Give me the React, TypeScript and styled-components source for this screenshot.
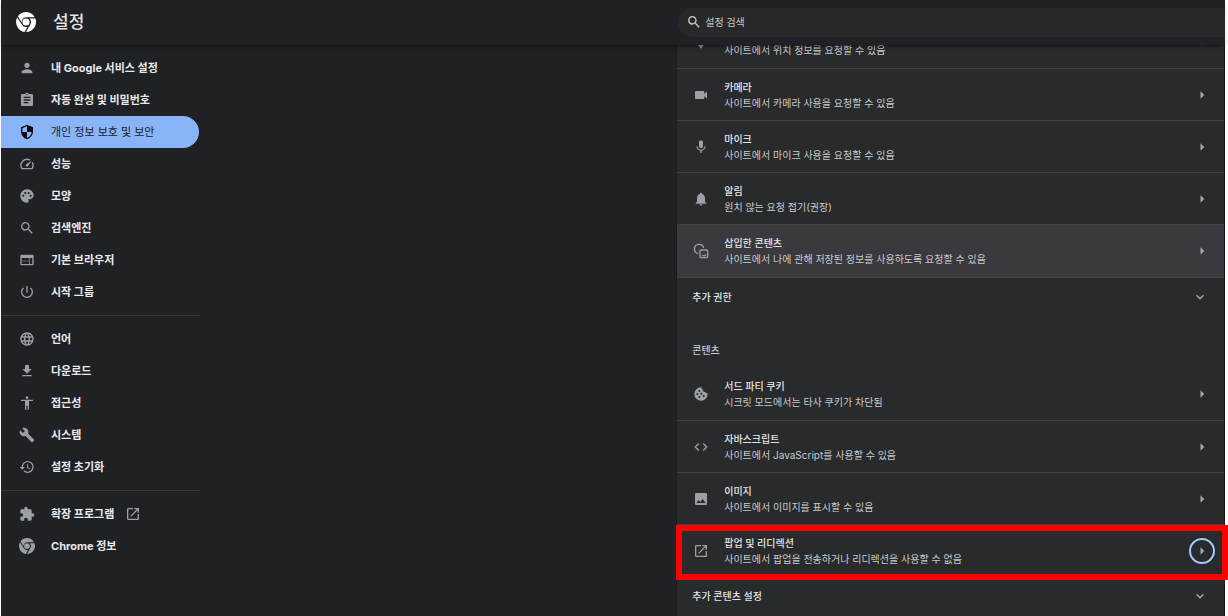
import React, { useState } from "react";
import type { ReactNode } from "react";
import styled, { createGlobalStyle } from "styled-components";
import {
  MdAccessibility,
  MdArrowRight,
  MdAssignment,
  MdBuild,
  MdCode,
  MdExpandMore,
  MdExtension,
  MdFileDownload,
  MdHistory,
  MdImage,
  MdLanguage,
  MdLocationOn,
  MdMic,
  MdNotifications,
  MdOpenInNew,
  MdPalette,
  MdPerson,
  MdPowerSettingsNew,
  MdSearch,
  MdSecurity,
  MdSpeed,
  MdVideocam,
  MdWeb,
} from "react-icons/md";

const GlobalStyle = createGlobalStyle`
  * { box-sizing: border-box; }
  body {
    margin: 0;
    background: #fff;
    font-family: Inter, "Noto Sans CJK KR", sans-serif;
    font-size: 10px;
  }
  button, input { font: inherit; color: inherit; }
`;

const Window = styled.div`
  display: flex;
  flex-direction: column;
  height: 100vh;
  padding: 0 3px 0 1px;
  overflow: hidden;
  color: #e3e5e8;
`;

const Toolbar = styled.header`
  display: grid;
  grid-template-columns: calc(55% + 2px) 1fr;
  align-items: center;
  flex: none;
  height: 45px;
  padding-bottom: 1px;
  position: relative;
  z-index: 1;
  background: #202124;
  box-shadow: 0 3px 4px -2px rgba(0, 0, 0, 0.6);
`;

const Brand = styled.div`
  display: flex;
  align-items: center;
  gap: 17px;
  padding-left: 15px;
  color: #fff;
`;

const Title = styled.h1`
  margin: 0;
  font-size: 17px;
  font-weight: 500;
  line-height: 24px;
  color: #e3e5e8;
`;

const SearchBox = styled.label`
  display: flex;
  align-items: center;
  gap: 3px;
  height: 29px;
  margin-left: 2px;
  padding-left: 8px;
  border-radius: 15px 3px 3px 15px;
  background: #282828;
  color: #c7cacf;
`;

const SearchInput = styled.input`
  flex: 1;
  min-width: 0;
  padding: 0;
  border: 0;
  outline: 0;
  background: transparent;
  line-height: 16px;

  &::placeholder {
    color: #c4c7cb;
    opacity: 1;
  }
`;

const Body = styled.div`
  display: grid;
  grid-template-columns: calc(55% + 2px) 1fr;
  flex: 1;
  min-height: 0;
  background: #202124;
`;

const Sidebar = styled.nav`
  width: 199px;
  padding-top: 7px;
`;

const MenuLink = styled.a<{ $active?: boolean }>`
  display: flex;
  align-items: center;
  gap: 16px;
  height: 32px;
  margin-right: 1px;
  padding-left: 18px;
  border-radius: 0 16px 16px 0;
  font-size: 11px;
  font-weight: ${(p) => (p.$active ? 400 : 700)};
  line-height: 16px;
  text-decoration: none;
  color: ${(p) => (p.$active ? "#202124" : "#e8eaed")};
  background: ${(p) => (p.$active ? "#8ab4f8" : "transparent")};

  svg {
    flex: none;
    color: ${(p) => (p.$active ? "#0b0c0e" : "#9aa0a6")};
  }
`;

const MenuLabel = styled.span`
  display: flex;
  align-items: center;
  gap: 11px;
`;

const MenuDivider = styled.hr`
  height: 1px;
  margin: 7px 0;
  border: 0;
  background: #36373a;
`;

const Content = styled.main`
  min-width: 0;
  border-left: 1px solid #1a1b1d;
  border-right: 1px solid #18191b;
  background: #292a2c;
`;

const ScrolledList = styled.div`
  margin-top: -29px;
`;

const SettingRow = styled.button<{ $hovered?: boolean; $first?: boolean }>`
  display: flex;
  align-items: center;
  width: 100%;
  min-height: ${(p) => (p.$hovered ? 53 : 52)}px;
  padding: 0 9px 0 16px;
  border: 0;
  border-top: ${(p) => (p.$first ? 0 : 1)}px solid #3f4043;
  background: ${(p) => (p.$hovered ? "#3a393e" : "transparent")};
  text-align: left;

  & > svg {
    flex: none;
    color: #9aa0a6;
  }
`;

const RowText = styled.span<{ $noteOnly?: boolean }>`
  display: flex;
  flex-direction: column;
  flex: 1;
  padding: ${(p) => (p.$noteOnly ? 16 : 0)}px 0 0 15px;
  line-height: 16px;
`;

const RowTitle = styled.span`
  font-weight: 500;
  color: #e3e5e8;
`;

const RowNote = styled.span`
  color: #c7cacd;
`;

const ArrowRing = styled.span<{ $focused?: boolean }>`
  display: flex;
  align-items: center;
  justify-content: center;
  width: 26px;
  height: 26px;
  border: 2px solid ${(p) => (p.$focused ? "#a8c7fa" : "transparent")};
  border-radius: 50%;
  color: #a4a8ad;
`;

const ExpandRow = styled.button`
  display: flex;
  align-items: center;
  justify-content: space-between;
  width: 100%;
  height: 39px;
  padding: 0 16px 0 15px;
  border: 0;
  border-top: 1px solid #3f4043;
  background: transparent;
  font-weight: 500;
  line-height: 16px;
  color: #e3e5e8;

  svg {
    color: #a4a8ad;
  }
`;

const SectionHeading = styled.h2`
  margin: 26px 0 10px;
  padding-left: 15px;
  font-size: 10px;
  font-weight: 500;
  line-height: 16px;
  color: #c7cacd;
`;

const Highlighted = styled.div`
  position: relative;

  &::after {
    content: "";
    position: absolute;
    inset: 1px -4px -4px -1px;
    border: 6px solid #ff0000;
    pointer-events: none;
  }
`;

function ChromeLogo({ size }: { size: number }) {
  return (
    <svg width={size} height={size} viewBox="0 0 24 24" fill="currentColor" aria-hidden="true">
      <circle cx="12" cy="12" r="4.3" />
      <path d="M12 6.2h10.4A12 12 0 0 0 2.3 5l4.6 8A5.8 5.8 0 0 1 12 6.2Z" />
      <path d="M16.1 7.9h7.2A12 12 0 0 1 12 24l5-8.8a5.8 5.8 0 0 0-.9-7.3Z" />
      <path d="M1.4 6.5A12 12 0 0 0 10.2 23.9l3.6-6.3A5.8 5.8 0 0 1 7 14.9Z" />
    </svg>
  );
}

function CookieIcon() {
  return (
    <svg width="16" height="16" viewBox="0 0 24 24" aria-hidden="true">
      <path
        d="M12 2a10 10 0 1 0 10 10c0-.5 0-.9-.1-1.3-1.800.5-3.200-.3-3.700-1.900-2.300.4-3.700-1-3.400-3.100C13.200 5.200 12.300 3.800 12.800 2Z"
        fill="currentColor"
      />
      <g fill="#292a2c">
        <circle cx="9.500" cy="7.500" r="1.500" />
        <circle cx="6.500" cy="12" r="1.500" />
        <circle cx="12.500" cy="11.500" r="1.500" />
        <circle cx="9.500" cy="16.500" r="1.500" />
        <circle cx="16" cy="15" r="1.500" />
      </g>
    </svg>
  );
}

function EmbeddedIcon() {
  return (
    <svg width="16" height="16" viewBox="0 0 24 24" fill="none" stroke="currentColor" strokeWidth="2" aria-hidden="true">
      <path d="M7.6 15.8A7 7 0 1 1 16 7.4" />
      <rect x="10.5" y="10.5" width="11.5" height="11.5" rx="1.5" />
      <path d="M12.8 19.8l2-2.6 1.4 1.6 1.8-2.4 2.6 3.4Z" fill="currentColor" stroke="none" />
    </svg>
  );
}

type MenuItem = { label: string; icon: ReactNode; external?: boolean };

const menuGroups: MenuItem[][] = [
  [
    { label: "내 Google 서비스 설정", icon: <MdPerson size={16} /> },
    { label: "자동 완성 및 비밀번호", icon: <MdAssignment size={16} /> },
    { label: "개인 정보 보호 및 보안", icon: <MdSecurity size={16} /> },
    { label: "성능", icon: <MdSpeed size={16} /> },
    { label: "모양", icon: <MdPalette size={16} /> },
    { label: "검색엔진", icon: <MdSearch size={16} /> },
    { label: "기본 브라우저", icon: <MdWeb size={16} /> },
    { label: "시작 그룹", icon: <MdPowerSettingsNew size={16} /> },
  ],
  [
    { label: "언어", icon: <MdLanguage size={16} /> },
    { label: "다운로드", icon: <MdFileDownload size={16} /> },
    { label: "접근성", icon: <MdAccessibility size={16} /> },
    { label: "시스템", icon: <MdBuild size={16} /> },
    { label: "설정 초기화", icon: <MdHistory size={16} /> },
  ],
  [
    { label: "확장 프로그램", icon: <MdExtension size={16} />, external: true },
    { label: "Chrome 정보", icon: <ChromeLogo size={16} /> },
  ],
];

type RowProps = {
  icon: ReactNode;
  title?: string;
  note: string;
  first?: boolean;
  hovered?: boolean;
  focused?: boolean;
};

function Row({ icon, title, note, first, hovered, focused }: RowProps) {
  return (
    <SettingRow type="button" $first={first} $hovered={hovered}>
      {icon}
      <RowText $noteOnly={!title}>
        {title && <RowTitle>{title}</RowTitle>}
        <RowNote>{note}</RowNote>
      </RowText>
      <ArrowRing $focused={focused}>
        <MdArrowRight size={18} />
      </ArrowRing>
    </SettingRow>
  );
}

export default function App() {
  const [active, setActive] = useState("개인 정보 보호 및 보안");

  return (
    <>
      <GlobalStyle />
      <Window>
        <Toolbar>
          <Brand>
            <ChromeLogo size={20} />
            <Title>설정</Title>
          </Brand>
          <SearchBox>
            <MdSearch size={16} />
            <SearchInput type="text" placeholder="설정 검색" aria-label="설정 검색" />
          </SearchBox>
        </Toolbar>
        <Body>
          <Sidebar>
            {menuGroups.map((group, index) => (
              <React.Fragment key={group[0].label}>
                {index > 0 && <MenuDivider />}
                {group.map((item) => (
                  <MenuLink
                    key={item.label}
                    href="#"
                    $active={item.label === active}
                    onClick={() => setActive(item.label)}
                  >
                    {item.icon}
                    <MenuLabel>
                      {item.label}
                      {item.external && <MdOpenInNew size={16} />}
                    </MenuLabel>
                  </MenuLink>
                ))}
              </React.Fragment>
            ))}
          </Sidebar>
          <Content>
            <ScrolledList>
              <Row first icon={<MdLocationOn size={16} />} note="사이트에서 위치 정보를 요청할 수 있음" />
              <Row icon={<MdVideocam size={16} />} title="카메라" note="사이트에서 카메라 사용을 요청할 수 있음" />
              <Row icon={<MdMic size={16} />} title="마이크" note="사이트에서 마이크 사용을 요청할 수 있음" />
              <Row icon={<MdNotifications size={16} />} title="알림" note="원치 않는 요청 접기(권장)" />
              <Row
                hovered
                icon={<EmbeddedIcon />}
                title="삽입한 콘텐츠"
                note="사이트에서 나에 관해 저장된 정보를 사용하도록 요청할 수 있음"
              />
              <ExpandRow type="button">
                추가 권한
                <MdExpandMore size={16} />
              </ExpandRow>
              <SectionHeading>콘텐츠</SectionHeading>
              <Row first icon={<CookieIcon />} title="서드 파티 쿠키" note="시크릿 모드에서는 타사 쿠키가 차단됨" />
              <Row icon={<MdCode size={16} />} title="자바스크립트" note="사이트에서 JavaScript를 사용할 수 있음" />
              <Row icon={<MdImage size={16} />} title="이미지" note="사이트에서 이미지를 표시할 수 있음" />
              <Highlighted>
                <Row
                  focused
                  icon={<MdOpenInNew size={16} />}
                  title="팝업 및 리디렉션"
                  note="사이트에서 팝업을 전송하거나 리디렉션을 사용할 수 없음"
                />
              </Highlighted>
              <ExpandRow type="button">
                추가 콘텐츠 설정
                <MdExpandMore size={16} />
              </ExpandRow>
            </ScrolledList>
          </Content>
        </Body>
      </Window>
    </>
  );
}
